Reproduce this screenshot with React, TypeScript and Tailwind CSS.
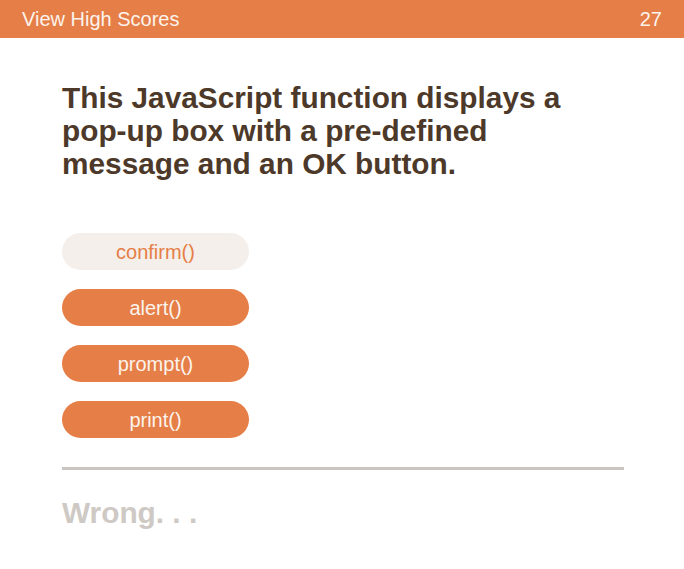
const choices = ["confirm()", "alert()", "prompt()", "print()"];

export default function App() {
  return (
    <div className="min-h-screen bg-white" style={{ fontFamily: '"Liberation Sans", Arial, sans-serif' }}>
      <header className="flex h-[38px] items-center justify-between bg-[#e67e47] px-[22px] text-[20px] text-[#fbf3ec]">
        <span>View High Scores</span>
        <span>27</span>
      </header>
      <main className="ml-[62px] w-[562px] pt-[43px]">
        <h1 className="w-[520px] text-[29.8px] font-bold leading-[33px] text-[#4d3929]">
          This JavaScript function displays a pop-up box with a pre-defined message and an OK button.
        </h1>
        <div className="mt-[53px] flex flex-col gap-[19px]">
          {choices.map((c, i) => (
            <button
              key={c}
              className={
                i === 0
                  ? "h-[37px] w-[187px] rounded-full bg-[#f4efea] text-[20px] text-[#e67e47]"
                  : "h-[37px] w-[187px] rounded-full bg-[#e67e47] text-[20px] text-[#fbf3ec]"
              }
            >
              {c}
            </button>
          ))}
        </div>
        <hr className="mt-[29px] border-t-[3px] border-[#cac5c0]" />
        <p className="mt-[21px] text-[29.8px] font-bold text-[#cec9c4]">Wrong. . .</p>
      </main>
    </div>
  );
}
